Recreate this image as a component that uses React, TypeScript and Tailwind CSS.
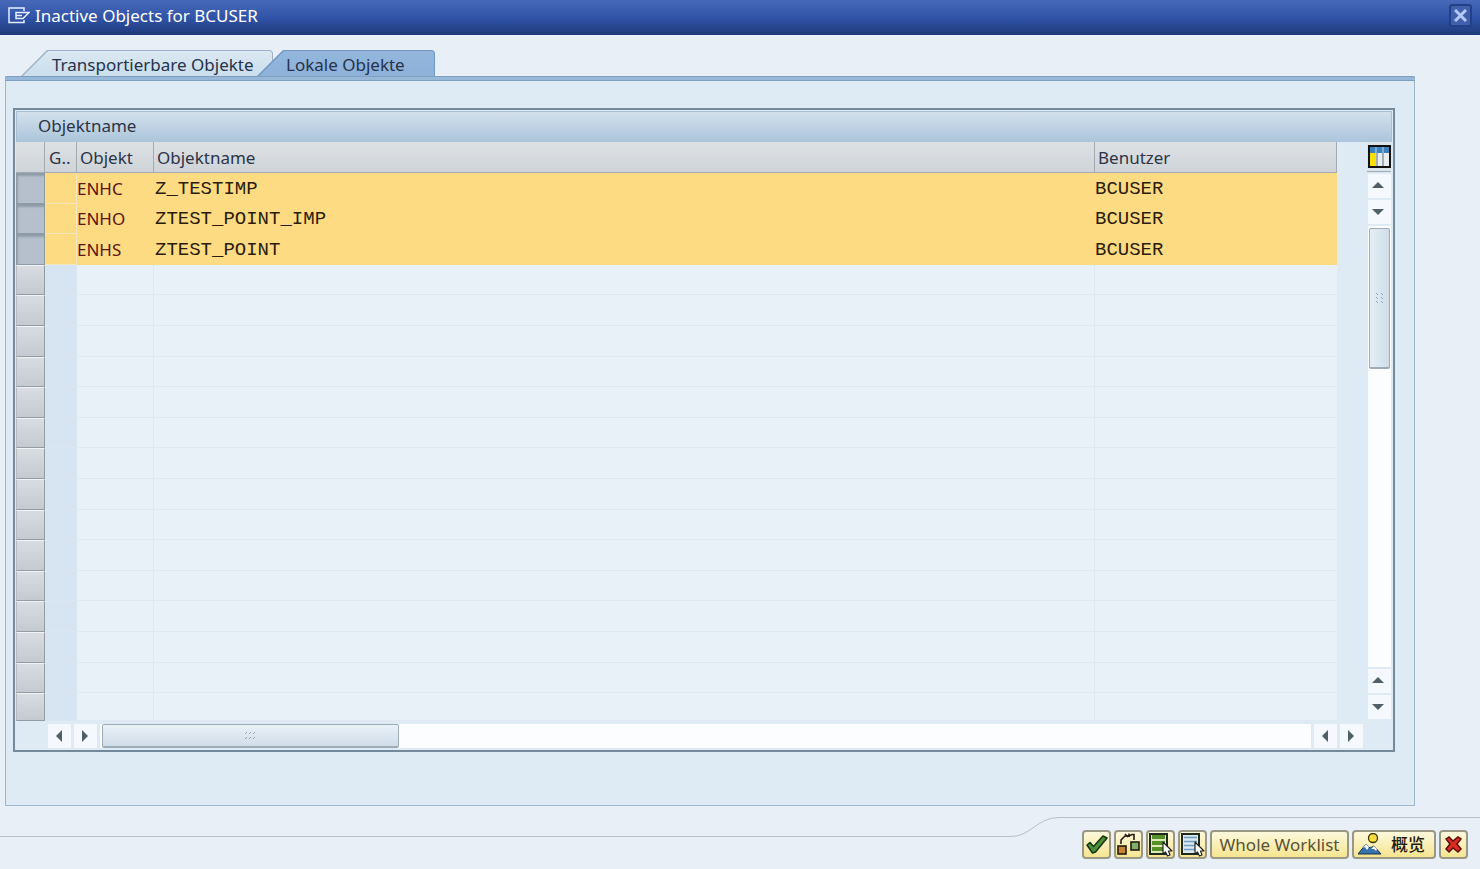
import { ReactNode } from "react";
import clsx from "clsx";

const rows = [
  { objekt: "ENHC", name: "Z_TESTIMP", user: "BCUSER" },
  { objekt: "ENHO", name: "ZTEST_POINT_IMP", user: "BCUSER" },
  { objekt: "ENHS", name: "ZTEST_POINT", user: "BCUSER" },
];

const ROW_COUNT = 18;

// row pitch is a bit over 30px, so two rows in five are one pixel shorter
function rowHeight(i: number) {
  if (i === ROW_COUNT - 1) return "h-7";
  return i % 5 === 1 || i % 5 === 3 ? "h-[30px]" : "h-[31px]";
}

function Arrow({ dir }: { dir: "up" | "down" | "left" | "right" }) {
  const paths = {
    up: "M0 9 L6 3 L12 9 Z",
    down: "M0 4 L12 4 L6 10 Z",
    left: "M3 7 L9 1 L9 13 Z",
    right: "M3 1 L9 7 L3 13 Z",
  };
  return (
    <button
      type="button"
      aria-label={`Scroll ${dir}`}
      className="flex h-6 w-[23px] shrink-0 items-center justify-center bg-[#f5f8fc]"
    >
      <svg width="14" height="14" viewBox="0 0 14 14" fill="#4f6068">
        <path d={paths[dir]} />
      </svg>
    </button>
  );
}

function Grip({ className }: { className?: string }) {
  return (
    <svg width="13" height="9" viewBox="0 0 13 9" className={className} stroke="#98a4b0">
      <path d="M1 3 l2 -2 M5 3 l2 -2 M9 3 l2 -2 M1 8 l2 -2 M5 8 l2 -2 M9 8 l2 -2" />
    </svg>
  );
}

function Tab({ active, children }: { active?: boolean; children: ReactNode }) {
  return (
    <button
      type="button"
      role="tab"
      aria-selected={!!active}
      className={clsx(
        "h-[26px] rounded-tr-[4px] pt-px pr-px pl-[2px] [clip-path:polygon(26px_0,100%_0,100%_100%,0_100%)]",
        active ? "z-10 -ml-4 w-[178px] bg-[#6f97c0]" : "w-[252px] bg-[#9db2c4]"
      )}
    >
      <span
        className={clsx(
          "flex h-full items-center rounded-tr-[3px] pt-[2px] text-[17px] leading-5 whitespace-nowrap text-[#26324a] [clip-path:polygon(25px_0,100%_0,100%_100%,0_100%)]",
          active
            ? "bg-linear-to-b from-[#93b6dc] to-[#8db1d9] pl-[27px]"
            : "bg-linear-to-b from-[#dbe8f2] to-[#cadeec] pl-[29px]"
        )}
      >
        {children}
      </span>
    </button>
  );
}

function ToolButton({ label, className, children }: { label?: string; className?: string; children: ReactNode }) {
  return (
    <button
      type="button"
      aria-label={label}
      className={clsx(
        "flex h-[29px] items-center justify-center rounded-[4px] border-2 border-[#9a9784] bg-linear-to-b from-[#fdf8dc] to-[#f6e58f] text-[17px] whitespace-nowrap text-[#5a5238]",
        className
      )}
    >
      {children}
    </button>
  );
}

function ListIcon({ fill, children }: { fill: string; children: ReactNode }) {
  return (
    <svg width="25" height="25" viewBox="0 0 25 25">
      <rect x="2" y="2" width="17" height="20" fill={fill} stroke="#1d2a1c" strokeWidth="2" />
      {children}
      <path
        d="M15 10 V22 L17.5 20 L19.5 24 L22 23 L20.5 19 H24 Z"
        fill="#fff"
        stroke="#222"
        strokeWidth="1.2"
        strokeLinejoin="round"
      />
    </svg>
  );
}

export default function App() {
  return (
    <div className="flex min-h-screen flex-col bg-[#e8eff6] font-['Noto_Sans','Noto_Sans_CJK_SC',sans-serif]">
      <header className="flex h-[35px] items-center bg-linear-to-b from-[#4869b8] via-[#3154a8] to-[#1e3a7b] pr-2 pl-2 text-white">
        <svg width="22" height="17" viewBox="0 0 22 17" fill="none" stroke="#e8eeff" strokeWidth="1.5" className="-mt-1">
          <path d="M16 4 V1 H1 V15.5 H16 V13" />
          <path d="M8 5.5 H21 L15 11.5 H8 Z M8 8.5 H14" />
        </svg>
        <h1 className="-mt-1 ml-[5px] flex-1 text-[17px] leading-5">Inactive Objects for BCUSER</h1>
        <button
          type="button"
          aria-label="Close"
          className="-mt-1 flex size-[23px] items-center justify-center rounded-[3px] border-2 border-[#233f86] bg-[#4060ac]"
        >
          <svg width="13" height="13" viewBox="0 0 13 13" stroke="#b4c8fa" strokeWidth="3">
            <path d="M1 1 L12 12 M12 1 L1 12" />
          </svg>
        </button>
      </header>

      <main className="flex-1 pt-[15px] pr-[65px] pl-[5px]">
        <div role="tablist" className="flex pl-4">
          <Tab>Transportierbare Objekte</Tab>
          <Tab active>Lokale Objekte</Tab>
        </div>

        <div className="border border-t-0 border-[#9cb8cf] bg-[#deebf5]">
          <div className="-mx-px h-[5px] rounded-t-[3px] border-t border-b border-[#7e9fbe] bg-[#97b8d9]" />
          <div className="pt-[27px] pr-[19px] pb-[53px] pl-[7px]">
            <section className="border-2 border-[#748a9b] p-px">
              <h2 className="flex h-[31px] items-center border border-b-0 border-[#a8bfd2] bg-linear-to-b from-[#d3e0eb] to-[#abc5db] pb-[3px] pl-[21px] text-[17px] leading-5 text-[#2c3448]">
                Objektname
              </h2>

              <div className="flex gap-1">
                <div className="min-w-0 flex-1">
                  <div className="pr-[26px]">
                    <table className="w-full table-fixed border-separate border-spacing-0 text-left text-[17px] leading-5">
                      <colgroup>
                        <col className="w-[29px]" />
                        <col className="w-8" />
                        <col className="w-[77px]" />
                        <col />
                        <col className="w-[242px]" />
                      </colgroup>
                      <thead>
                        <tr className="h-[31px] text-[#2c3448] *:border-r *:border-b *:border-[#a3abb2] *:bg-linear-to-b *:from-[#dde1e4] *:to-[#cfd4d8] *:p-0 *:font-normal">
                          <th aria-label="Selection" />
                          <th>
                            <span className="block pt-[2px] pl-1">G..</span>
                          </th>
                          <th>
                            <span className="block pt-[2px] pl-[3px]">Objekt</span>
                          </th>
                          <th>
                            <span className="block pt-[2px] pl-[3px]">Objektname</span>
                          </th>
                          <th>
                            <span className="block pt-[2px] pl-[3px]">Benutzer</span>
                          </th>
                        </tr>
                      </thead>
                      <tbody>
                        {Array.from({ length: ROW_COUNT }, (_, i) => {
                          const row = rows[i];
                          return (
                            <tr key={i} className={rowHeight(i)}>
                              <td className="h-px p-0">
                                <button
                                  type="button"
                                  aria-label={`Select row ${i + 1}`}
                                  className={clsx(
                                    "block h-full w-full border",
                                    row
                                      ? "border-[#8e9aa6] bg-[#b5c0cc] shadow-[inset_1px_2px_2px_#929eaa]"
                                      : "border-t-[#f1f3f5] border-r-[#939ba3] border-b-[#939ba3] border-l-[#b6bcc3] bg-linear-to-b from-[#d9dde2] to-[#c5cad0]"
                                  )}
                                />
                              </td>
                              {row ? (
                                <>
                                  <td className="border-r border-b border-[#f4e6bb] bg-[#fddb82] p-0" />
                                  <td className="bg-[#fddb82] p-0 text-[#5c1414]">{row.objekt}</td>
                                  <td className="bg-[#fddb82] p-0 pl-px font-['Liberation_Mono',monospace] text-[19px] text-[#2a1c08]">
                                    {row.name}
                                  </td>
                                  <td className="bg-[#fddb82] p-0 font-['Liberation_Mono',monospace] text-[19px] text-[#2a1c08]">
                                    {row.user}
                                  </td>
                                </>
                              ) : (
                                <>
                                  <td className="border-b border-[#dbe6f1] bg-[#d7e5f3] p-0" />
                                  <td className="border-r border-b border-[#e0e9f1] bg-[#e8f0f8] p-0" />
                                  <td className="border-r border-b border-[#e0e9f1] bg-[#e8f0f8] p-0" />
                                  <td className="border-b border-[#e0e9f1] bg-[#e8f0f8] p-0" />
                                </>
                              )}
                            </tr>
                          );
                        })}
                      </tbody>
                    </table>
                  </div>

                  <div className="flex gap-[3px] pt-[3px] pb-px pl-8">
                    <Arrow dir="left" />
                    <Arrow dir="right" />
                    <div className="flex-1 bg-[#fcfdfe] pl-[2px]">
                      <div className="flex h-6 w-[297px] items-center justify-center rounded-[2px] border border-b-2 border-[#9eacba] bg-linear-to-b from-[#e9f1f8] to-[#d0dde9]">
                        <Grip />
                      </div>
                    </div>
                    <Arrow dir="left" />
                    <Arrow dir="right" />
                  </div>
                </div>

                <div className="flex w-[25px] flex-col items-center pr-px">
                  <button
                    type="button"
                    aria-label="Table settings"
                    className="mb-[2px] flex h-[30px] w-full items-center justify-center border-b border-[#a3abb2] bg-[#dce5ec]"
                  >
                    <svg width="23" height="23" viewBox="0 0 23 23">
                      <rect x="1" y="1" width="21" height="21" fill="#e9edf0" stroke="#111" strokeWidth="2" />
                      <path d="M2 2 H21 V8 H2 Z" fill="#3e82bd" />
                      <path d="M2 8 H8 V21 H2 Z" fill="#f8e000" />
                      <path d="M9 8 V21 M15 8 V21" stroke="#8a98a2" strokeWidth="1.5" />
                      <path d="M8 2 V8 M15 2 V8" stroke="#b9d8ec" />
                    </svg>
                  </button>
                  <div className="flex w-full flex-1 flex-col items-center gap-[2px] pb-[30px]">
                    <Arrow dir="up" />
                    <Arrow dir="down" />
                    <div className="w-[23px] flex-1 bg-[#fcfdfe] pt-[2px] pl-px">
                      <div className="flex h-[141px] w-[21px] items-center justify-center rounded-[2px] border border-b-2 border-[#9eacba] bg-linear-to-r from-[#e6eef5] to-[#d0dde9]">
                        <Grip className="rotate-90" />
                      </div>
                    </div>
                    <Arrow dir="up" />
                    <Arrow dir="down" />
                  </div>
                </div>
              </div>
            </section>
          </div>
        </div>
      </main>

      <footer className="flex h-[52px] items-start">
        <div className="h-5 flex-1 border-b border-[#b5c0cb]" />
        <svg width="48" height="20" viewBox="0 0 48 20" fill="none" stroke="#b5c0cb">
          <path d="M0 19.5 C20 19.5 26 0.5 48 0.5" />
        </svg>
        <div className="flex gap-[3px] border-t border-[#b5c0cb] pt-3 pr-3 pl-[23px]">
          <ToolButton label="Continue" className="w-[29px]">
            <svg width="23" height="21" viewBox="0 0 23 21">
              <path
                d="M2 11 L5 8.5 L8.5 12.5 L18 2 L22 4 L10.5 18 L7.5 19 Z"
                fill="#4f8f3a"
                stroke="#163812"
                strokeWidth="1.6"
                strokeLinejoin="round"
              />
            </svg>
          </ToolButton>
          <ToolButton label="Change hierarchy" className="w-[29px]">
            <svg width="25" height="25" viewBox="0 0 25 25" fill="none" stroke="#221c10" strokeWidth="1.6">
              <path d="M5 12 V8 L9 4 H13 L16 2.5 H18 V8" />
              <path d="M9 2 L12 5 M13 1.5 V5" />
              <rect x="2" y="14" width="8" height="8" fill="#c98432" />
              <rect x="15" y="10" width="8" height="8" fill="#7fb06a" />
            </svg>
          </ToolButton>
          <ToolButton label="Select all" className="w-[29px]">
            <ListIcon fill="#dcebb4">
              <path d="M4 5H17M4 11H17M4 17H15" stroke="#578f28" strokeWidth="4" />
            </ListIcon>
          </ToolButton>
          <ToolButton label="Deselect all" className="w-[29px]">
            <ListIcon fill="#d9e9f2">
              <path d="M4 5.5H17M4 9.5H17M4 13.5H15M4 17.5H15" stroke="#6f9dbb" strokeWidth="1.6" />
            </ListIcon>
          </ToolButton>
          <ToolButton className="w-[139px]">Whole Worklist</ToolButton>
          <ToolButton className="w-[84px] gap-[9px] pr-[6px]">
            <svg width="25" height="23" viewBox="0 0 25 23">
              <circle cx="16" cy="5" r="4.5" fill="#f7dc3c" stroke="#3a3208" strokeWidth="1.3" />
              <path d="M1 21 L9 11 L13 15 L17 13 L24 21 Z" fill="#3673ab" stroke="#16324f" />
              <path d="M9 11 L6 15 L8 14 L10 17 L12 14 Z M17 13 L14 16 L17 16 L19 18 L20 16 Z" fill="#fff" />
            </svg>
            <span className="leading-5 font-medium text-[#1f1a0c]">概览</span>
          </ToolButton>
          <ToolButton label="Cancel" className="w-[29px]">
            <svg width="19" height="19" viewBox="0 0 19 19">
              <path
                d="M2 4 L5 2 L9 6 L14 2 L17 4 L13 9 L17 14 L14 17 L9 13 L5 17 L2 14 L6 9 Z"
                fill="#d92b20"
                stroke="#5a0f0a"
                strokeWidth="1.5"
              />
            </svg>
          </ToolButton>
        </div>
      </footer>
    </div>
  );
}
